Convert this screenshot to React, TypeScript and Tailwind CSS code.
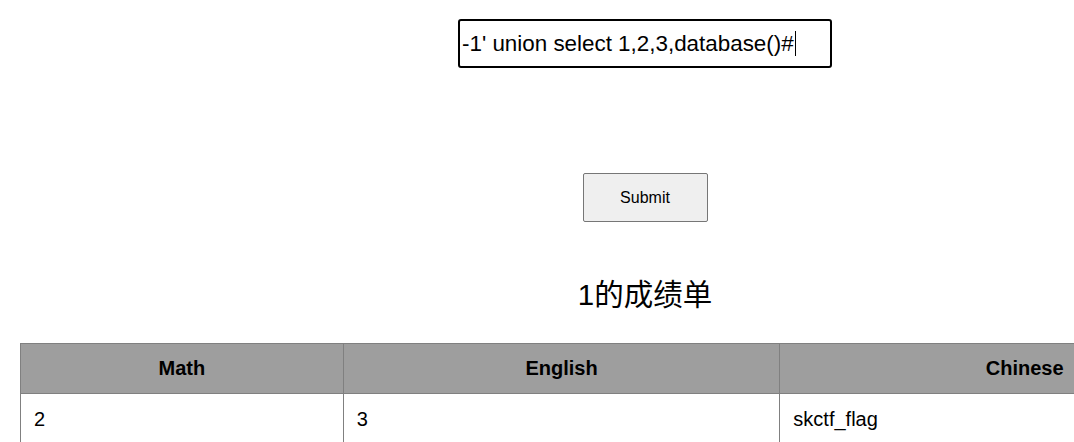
import React from "react";

const rows = [{ math: "2", english: "3", chinese: "skctf_flag" }];

const App: React.FC = () => {
  return (
    <div className="w-[1074px] h-[442px] overflow-hidden bg-white">
      <div className="w-[1290px] flex flex-col items-center pt-[19px] font-['Liberation_Sans',Arial,sans-serif] text-black">
        {/* query box, drawn focused with caret */}
        <div className="w-[374px] h-[49px] border-2 border-black rounded-[3px] px-[2px] flex items-center text-[22.4px] whitespace-pre">
          <span>-1' union select 1,2,3,database()#</span>
          <span className="inline-block w-px h-[25px] bg-black ml-px" />
        </div>

        <button
          type="button"
          className="mt-[105px] w-[125px] h-[49px] bg-[#efefef] border border-[#767676] rounded-[2px] text-[16px]"
        >
          Submit
        </button>

        <h2 className="mt-[53px] h-[40px] leading-[40px] text-[29.5px] font-normal font-['Liberation_Sans','Noto_Sans_CJK_SC',sans-serif]">
          1的成绩单
        </h2>

        <table className="mt-[28px] w-[1250px] border-collapse text-[20px]">
          <thead>
            <tr className="bg-[#9e9e9e] h-[50px]">
              <th className="w-[323px] border border-[#808080] font-bold pb-[2px]">Math</th>
              <th className="w-[437px] border border-[#808080] font-bold pb-[2px]">English</th>
              <th className="w-[490px] border border-[#808080] font-bold pb-[2px]">Chinese</th>
            </tr>
          </thead>
          <tbody>
            {rows.map((r, i) => (
              <tr key={i} className="h-[50px]">
                <td className="border border-[#808080] px-[13px]">{r.math}</td>
                <td className="border border-[#808080] px-[13px]">{r.english}</td>
                <td className="border border-[#808080] px-[13px]">{r.chinese}</td>
              </tr>
            ))}
          </tbody>
        </table>
      </div>
    </div>
  );
};

export default App;
